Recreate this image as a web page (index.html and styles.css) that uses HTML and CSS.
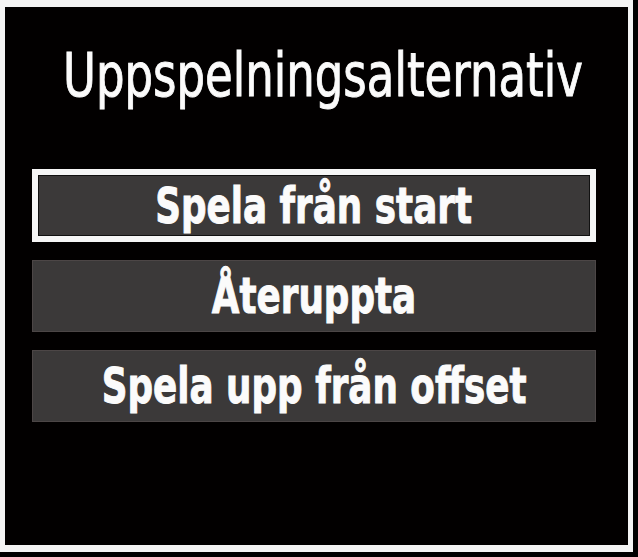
FILE: index.html
```html
<!DOCTYPE html>
<html lang="sv">
<head>
<meta charset="utf-8">
<title>Uppspelningsalternativ</title>
<link rel="stylesheet" href="styles.css">
</head>
<body>
<div class="screen">
  <div class="frame">
    <h1 class="title"><span class="squeeze">Uppspelningsalternativ</span></h1>
    <ul class="menu">
      <li class="item selected"><span class="squeeze">Spela från start</span></li>
      <li class="item"><span class="squeeze">Återuppta</span></li>
      <li class="item"><span class="squeeze">Spela upp från offset</span></li>
    </ul>
  </div>
</div>
</body>
</html>
```
FILE: styles.css
```css
html, body {
  margin: 0;
  padding: 0;
  background: #000;
}
.screen {
  width: 638px;
  height: 557px;
  background: #000;
  overflow: hidden;
}
.frame {
  box-sizing: border-box;
  width: 633px;
  height: 552px;
  border-style: solid;
  border-color: #f4f4f4;
  border-width: 7px 5px 7px 5px;
  background: #020000;
  font-family: "DejaVu Sans", sans-serif;
  color: #fbfbfb;
  overflow: hidden;
}
.title {
  margin: 0;
  padding: 33px 0 0 58px;
  font-size: 60px;
  font-weight: normal;
  line-height: 70px;
  white-space: nowrap;
}
.title .squeeze {
  display: inline-block;
  transform: scaleX(0.75);
  transform-origin: left center;
  -webkit-text-stroke: 1px #fbfbfb;
}
.menu {
  list-style: none;
  margin: 59px 0 0 27px;
  padding: 0;
  display: flex;
  flex-direction: column;
  gap: 18px;
}
.item {
  box-sizing: border-box;
  width: 564px;
  height: 72px;
  background: #3b3939;
  border: 1px solid #4c4646;
  display: flex;
  align-items: center;
  justify-content: center;
  font-size: 50px;
  font-weight: bold;
  white-space: nowrap;
}
.item .squeeze {
  display: inline-block;
  transform: scaleX(0.715);
  transform-origin: center center;
  -webkit-text-stroke: 1px #fbfbfb;
}
.item.selected {
  height: 73px;
  border: 6px solid #f6f6f6;
  box-shadow: inset 0 0 0 1px #111;
}
```
